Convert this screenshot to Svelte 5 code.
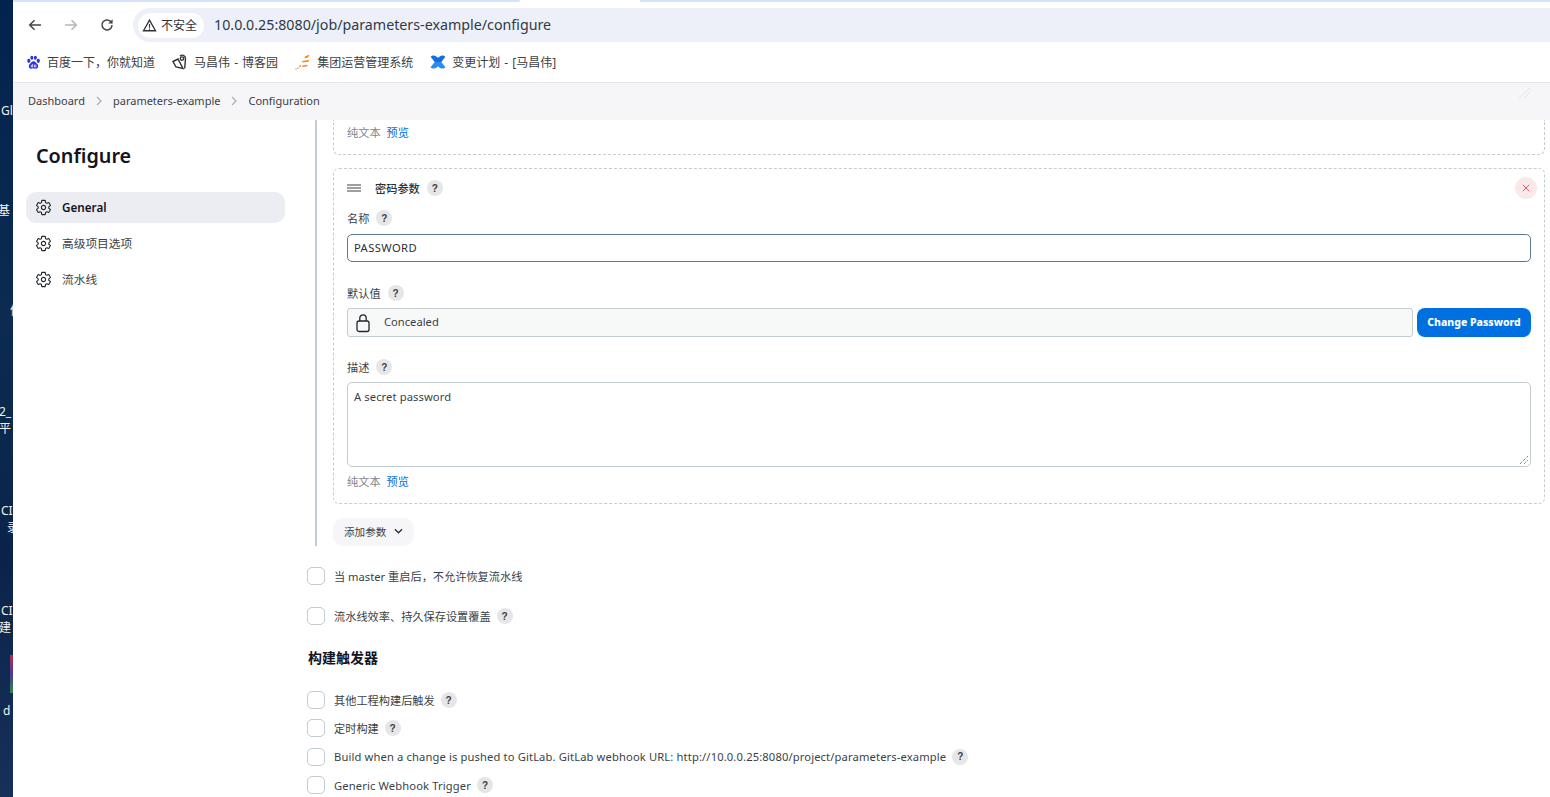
<script>
  const bookmarks = [
    { id: 'baidu', label: '百度一下，你就知道' },
    { id: 'blog', label: '马昌伟 - 博客园' },
    { id: 'group', label: '集团运营管理系统' },
    { id: 'jira', label: '变更计划 - [马昌伟]' }
  ]
  const crumbs = ['Dashboard', 'parameters-example', 'Configuration']
  const nav = [
    { label: 'General', active: true },
    { label: '高级项目选项', active: false },
    { label: '流水线', active: false }
  ]
  const gear =
    'M262.29 192.31a64 64 0 1057.4 57.4 64.13 64.13 0 00-57.4-57.4zM416.39 256a154.34 154.34 0 01-1.53 20.79l45.21 35.46a10.81 10.81 0 012.45 13.75l-42.77 74a10.81 10.81 0 01-13.14 4.59l-44.9-18.08a16.11 16.11 0 00-15.17 1.75A164.48 164.48 0 01325 400.8a15.94 15.94 0 00-8.82 12.14l-6.73 47.89a11.08 11.08 0 01-10.68 9.17h-85.54a11.11 11.11 0 01-10.69-8.87l-6.72-47.82a16.07 16.07 0 00-9-12.22 155.3 155.3 0 01-21.46-12.57 16 16 0 00-15.11-1.71l-44.89 18.07a10.81 10.81 0 01-13.14-4.58l-42.77-74a10.8 10.8 0 012.45-13.75l38.21-30a16.05 16.05 0 006-14.08c-.36-4.17-.58-8.33-.58-12.5s.21-8.27.58-12.35a16 16 0 00-6.07-13.94l-38.19-30A10.81 10.81 0 0149.48 186l42.77-74a10.81 10.81 0 0113.14-4.59l44.9 18.08a16.11 16.11 0 0015.17-1.75A164.48 164.48 0 01187 111.2a15.94 15.94 0 008.82-12.14l6.73-47.89A11.08 11.08 0 01213.23 42h85.54a11.11 11.11 0 0110.69 8.87l6.72 47.82a16.07 16.07 0 009 12.22 155.3 155.3 0 0121.46 12.57 16 16 0 0015.11 1.71l44.89-18.07a10.81 10.81 0 0113.14 4.58l42.77 74a10.8 10.8 0 01-2.45 13.75l-38.21 30a16.05 16.05 0 00-6.05 14.08c.33 4.14.55 8.3.55 12.47z'
  const scraps = [
    { text: 'Gl', x: 1, y: 103 },
    { text: '基', x: -2, y: 203 },
    { text: '信', x: 10, y: 303 },
    { text: '2_', x: -1, y: 404 },
    { text: '平', x: -1, y: 421 },
    { text: 'CI', x: 1, y: 503 },
    { text: '录', x: 7, y: 520 },
    { text: 'CI', x: 1, y: 603 },
    { text: '建', x: -1, y: 620 },
    { text: 'd', x: 3, y: 703 }
  ]
</script>

<div class="screen">
  <div class="desktop">
    {#each scraps as s}
      <span class="scrap" style="left:{s.x}px;top:{s.y}px">{s.text}</span>
    {/each}
    <span class="shortcut"></span>
  </div>

  <div class="browser">
    <div class="tabs">
      <div class="tab-a"></div>
      <div class="tab-b"></div>
    </div>

    <div class="toolbar">
      <svg class="tool" viewBox="0 0 16 16"><path d="M14 8H3M7.5 3.2 2.7 8l4.8 4.8" /></svg>
      <svg class="tool off" viewBox="0 0 16 16"><path d="M2 8h11M8.5 3.2 13.3 8l-4.8 4.8" /></svg>
      <svg class="tool" viewBox="0 0 16 16"><path d="M13 8a5 5 0 1 1-1.500-3.600L13 6" /><path class="fill" d="M13.600 2.200v4.400H9.200z" /></svg>
      <div class="omnibox">
        <span class="chip">
          <svg viewBox="0 0 16 16" width="15" height="15"><path d="M8 2.200 14.400 13.600H1.600z" fill="none" stroke="#2f3136" stroke-width="1.400" /><path d="M8 6.400v4M8 11.200v1.200" stroke="#2f3136" stroke-width="1.200" /></svg>
          不安全
        </span>
        <span class="url">10.0.0.25:8080/job/parameters-example/configure</span>
      </div>
    </div>

    <div class="bookmarks">
      {#each bookmarks as b}
        <div class="bookmark">
          {#if b.id === 'baidu'}
            <svg viewBox="0 0 16 16" width="15" height="15">
              <g fill="#2932e1">
                <ellipse cx="3" cy="6.200" rx="1.700" ry="2.200" />
                <ellipse cx="6.200" cy="2.900" rx="1.600" ry="2.200" />
                <ellipse cx="10" cy="2.900" rx="1.600" ry="2.200" />
                <ellipse cx="13.100" cy="6.200" rx="1.700" ry="2.200" />
                <path d="M8 6.600c-2 0-2.600 1.900-4 3-1.500 1.200-1.500 4.900 1.400 5 1 0 1.700-.4 2.600-.4s1.700.4 2.600.4c2.900-.1 2.900-3.800 1.400-5-1.400-1.100-2-3-4-3z" />
              </g>
              <path d="M5.600 10.500v2.300h1.500v-3.400M9 10.200v2.600h1.500v-2.600" fill="none" stroke="#fff" stroke-width=".8" />
            </svg>
          {:else if b.id === 'blog'}
            <svg viewBox="0 0 16 16" width="16" height="16" fill="none" stroke="#333" stroke-width="1.400">
              <path d="M1 7.500 6 5l5 9.500-7-1.500z" />
              <path d="M8 2c2-1.600 5.500-.8 5.500 2.500l-.8 10" />
              <circle cx="10" cy="4.600" r="1.700" />
            </svg>
          {:else if b.id === 'group'}
            <svg viewBox="0 0 16 16" width="16" height="16" fill="#ee8a1c">
              <path d="M10 2.500 14.500.5l-1.500 3-3.500 1zM7.500 7l7-1.200-1.200 2L7 8.600zM7.500 11.500l5.500-.8-1.500 1.800-4.500.4zM4.500 11.500l1.600-.7-.6 2.200-1.300.5zM2.400 13.500l1.100-.3-.3 1.600-1 .2zM.4 14.500h1.100v1.200H.4z" />
            </svg>
          {:else}
            <svg viewBox="0 0 16 16" width="16" height="16">
              <path fill="#0f6fe0" d="M.6 2.800c2.600-2.600 5.200-1.200 7.400 1 2.200-2.200 4.800-3.600 7.400-1L11.300 8H4.700z" />
              <path fill="#2a8cf0" d="M15.400 13.200c-2.600 2.600-5.200 1.200-7.400-1-2.200 2.200-4.800 3.600-7.400 1L4.700 8h6.600z" />
            </svg>
          {/if}
          <span>{b.label}</span>
        </div>
      {/each}
    </div>

    <div class="crumbs">
      {#each crumbs as c, i}
        {#if i > 0}
          <svg class="sep" viewBox="0 0 8 10" width="8" height="10"><path d="M2 1l4 4-4 4" /></svg>
        {/if}
        <span>{c}</span>
      {/each}
      <svg class="ghost" viewBox="0 0 16 16" width="16" height="16"><path d="M3 13 14 3M8 13l6-6" /></svg>
    </div>

    <div class="main">
      <aside class="sidebar">
        <h1>Configure</h1>
        {#each nav as n}
          <div class="nav-item" class:active={n.active}>
            <svg viewBox="0 0 512 512" width="17" height="17"><path d={gear} /></svg>
            <span>{n.label}</span>
          </div>
        {/each}
      </aside>

      <section class="form">
        <div class="params">
          <div class="card clipped">
            <div class="textfoot">纯文本 <a href="#top">预览</a></div>
          </div>

          <div class="card">
            <div class="card-head">
              <svg class="drag" viewBox="0 0 14 8" width="14" height="8"><path d="M0 1h14M0 4h14M0 7h14" /></svg>
              <strong>密码参数</strong>
              <span class="help">?</span>
              <span class="remove">
                <svg viewBox="0 0 8 8" width="8" height="8"><path d="M.8.8l6.400 6.400M7.200.8.8 7.200" /></svg>
              </span>
            </div>

            <div class="label first">名称 <span class="help">?</span></div>
            <div class="input focus">PASSWORD</div>

            <div class="label second">默认值 <span class="help">?</span></div>
            <div class="secret">
              <div class="concealed">
                <svg viewBox="0 0 16 20" width="16" height="20" fill="none" stroke="#20252c" stroke-width="1.300">
                  <rect x="2" y="8" width="12" height="10.500" rx="2" />
                  <path d="M4.800 8V5a3.200 3.200 0 0 1 6.400 0v3" />
                </svg>
                <span>Concealed</span>
              </div>
              <button type="button">Change Password</button>
            </div>

            <div class="label third">描述 <span class="help">?</span></div>
            <div class="textarea">
              A secret password
              <svg class="grip" viewBox="0 0 10 10" width="10" height="10"><path d="M1 9 9 1M5 9l4-4" /></svg>
            </div>
            <div class="textfoot">纯文本 <a href="#top">预览</a></div>
          </div>

          <button type="button" class="add">
            添加参数
            <svg viewBox="0 0 10 6" width="9" height="6"><path d="M1 1l4 4 4-4" /></svg>
          </button>
        </div>

        <div class="check gap-a"><i></i>当 master 重启后，不允许恢复流水线</div>
        <div class="check gap-b"><i></i>流水线效率、持久保存设置覆盖 <span class="help">?</span></div>

        <h2>构建触发器</h2>

        <div class="check gap-c"><i></i>其他工程构建后触发 <span class="help">?</span></div>
        <div class="check gap-d"><i></i>定时构建 <span class="help">?</span></div>
        <div class="check gap-d latin"><i></i>Build when a change is pushed to GitLab. GitLab webhook URL: http://10.0.0.25:8080/project/parameters-example <span class="help">?</span></div>
        <div class="check gap-d latin"><i></i>Generic Webhook Trigger <span class="help">?</span></div>
      </section>
    </div>
  </div>
</div>

<style>
  :global(body) {
    margin: 0;
    overflow: hidden;
  }

  .screen {
    display: flex;
    width: 1550px;
    height: 797px;
    overflow: hidden;
    font-family: "Noto Sans", "Noto Sans CJK SC", sans-serif;
    font-size: 11.2px;
    color: #3a3f47;
  }

  .desktop {
    position: relative;
    flex: none;
    width: 13px;
    overflow: hidden;
    background: linear-gradient(180deg, #03234f 0%, #0c2b50 40%, #0a2449 70%, #17305a 100%);
  }

  .scrap {
    position: absolute;
    color: #f2f2f2;
    font-size: 12px;
    line-height: 16px;
  }

  .shortcut {
    position: absolute;
    left: 10px;
    top: 655px;
    width: 3px;
    height: 38px;
    background: linear-gradient(180deg, #b5304a 0%, #4a3a9a 50%, #2d8a4a 100%);
  }

  .browser {
    flex: 1;
    min-width: 0;
    display: flex;
    flex-direction: column;
    background: #fff;
  }

  .tabs {
    display: flex;
    height: 2px;
    background: #fff;
  }

  .tab-a {
    width: 507px;
    background: #d3e3fd;
    border-bottom-right-radius: 4px;
  }

  .tab-b {
    flex: 1;
    margin-left: 120px;
    background: #d3e3fd;
  }

  .toolbar {
    display: flex;
    align-items: center;
    height: 34px;
    padding-top: 6px;
  }

  .tool {
    flex: none;
    width: 16px;
    height: 16px;
    margin-left: 14px;
    margin-right: 6px;
    fill: none;
    stroke: #45474a;
    stroke-width: 1.5;
  }

  .tool.off {
    stroke: #b4b6b9;
  }

  .tool .fill {
    fill: #45474a;
    stroke: none;
  }

  .omnibox {
    flex: 1;
    display: flex;
    align-items: center;
    gap: 10px;
    height: 34px;
    margin-left: 12px;
    padding-left: 5px;
    background: #edf0f9;
    border-radius: 17px 0 0 17px;
  }

  .chip {
    display: flex;
    align-items: center;
    gap: 4px;
    height: 25px;
    padding: 0 7px 0 4px;
    background: #fff;
    border-radius: 13px;
    font-size: 12px;
    color: #2f3136;
  }

  .url {
    padding-bottom: 2px;
    font-size: 14.25px;
    color: #2f3a46;
  }

  .bookmarks {
    display: flex;
    align-items: center;
    gap: 17px;
    height: 40px;
    padding-left: 13px;
    border-bottom: 1px solid #e6e6e8;
    font-size: 12px;
    word-spacing: 1px;
    color: #3c4043;
  }

  .bookmark {
    display: flex;
    align-items: center;
    gap: 6px;
  }

  .crumbs {
    position: relative;
    display: flex;
    align-items: center;
    gap: 10px;
    height: 35px;
    padding: 0 0 2px 15px;
    background: #f6f6f8;
    font-size: 11px;
    color: #3b4049;
  }

  .sep {
    fill: none;
    stroke: #a8acb3;
    stroke-width: 1.200;
  }

  .ghost {
    position: absolute;
    left: 1503px;
    top: 2px;
    fill: none;
    stroke: #e4e5e8;
  }

  .main {
    flex: 1;
    min-height: 0;
    display: flex;
    overflow: hidden;
  }

  .sidebar {
    flex: none;
    width: 294px;
    box-sizing: border-box;
    padding: 0 22px 0 13px;
  }

  h1 {
    margin: 22px 0 22px 10px;
    font-size: 19.8px;
    line-height: 28px;
    font-weight: 600;
    color: #14141f;
  }

  .nav-item {
    display: flex;
    align-items: center;
    gap: 9px;
    height: 31px;
    margin-bottom: 5px;
    padding-left: 9px;
    border-radius: 10px;
    font-size: 11.700px;
    color: #3a3f47;
  }

  .nav-item span {
    margin-top: -2px;
    margin-left: 1px;
  }

  .nav-item.active {
    background: #ecedf2;
    font-weight: 600;
    color: #14141f;
  }

  .nav-item svg {
    fill: none;
    stroke: #20252c;
    stroke-width: 34;
    stroke-linejoin: round;
  }

  .form {
    flex: 1;
    min-width: 0;
  }

  .params {
    margin-left: 8px;
    padding: 0 5px 0 16px;
    border-left: 2px solid #c3ccd1;
    height: 426px;
  }

  .card {
    box-sizing: border-box;
    height: 336px;
    padding: 9px 13px 0 13px;
    border: 1px dashed #c3ccd1;
    border-radius: 6px;
  }

  .card.clipped {
    height: 35px;
    margin-bottom: 13px;
    padding-top: 5px;
    border-top: none;
    border-top-left-radius: 0;
    border-top-right-radius: 0;
  }

  .card-head {
    display: flex;
    align-items: center;
    gap: 14px;
    height: 20px;
    font-weight: 600;
    color: #2b2f36;
  }

  .card-head strong {
    font-weight: 500;
  }

  .card-head .help {
    margin-left: -7px;
  }

  .drag {
    fill: none;
    stroke: #3a3f47;
    stroke-width: 1.100;
  }

  .remove {
    display: flex;
    align-items: center;
    justify-content: center;
    width: 22px;
    height: 22px;
    margin-left: auto;
    margin-right: -6px;
    border-radius: 50%;
    background: #fbe9ea;
  }

  .remove svg {
    fill: none;
    stroke: #e6566e;
    stroke-width: 1;
  }

  .label {
    display: flex;
    align-items: center;
    gap: 7px;
    height: 18px;
    color: #3a3f47;
  }

  .label.first {
    margin-top: 11px;
    margin-bottom: 7px;
  }

  .label.second {
    margin-top: 22px;
    margin-bottom: 6px;
  }

  .label.third {
    margin-top: 21px;
    margin-bottom: 6px;
  }

  .help {
    display: inline-flex;
    align-items: center;
    justify-content: center;
    width: 16px;
    height: 16px;
    margin-left: 3px;
    border-radius: 50%;
    background: #e6e6e8;
    font-family: "Liberation Sans", sans-serif;
    font-size: 10px;
    font-weight: 700;
    color: #3a3f47;
  }

  .label .help {
    margin-left: 0;
  }

  .input {
    box-sizing: border-box;
    display: flex;
    align-items: center;
    height: 28px;
    padding: 0 6px 2px;
    border: 1px solid #5f7a8c;
    border-radius: 5px;
    letter-spacing: 0.4px;
    color: #2b2f36;
  }

  .secret {
    display: flex;
    gap: 4px;
    height: 29px;
  }

  .concealed {
    flex: 1;
    box-sizing: border-box;
    display: flex;
    align-items: center;
    gap: 13px;
    padding: 0 0 2px 7px;
    background: #f7f8f8;
    border: 1px solid #c3ccd1;
    border-radius: 3px;
  }

  .concealed svg {
    margin-top: 2px;
  }

  .secret button {
    flex: none;
    width: 114px;
    padding: 0 0 2px;
    border: none;
    border-radius: 8px;
    background: #0070e0;
    color: #fff;
    font: inherit;
    font-size: 10.500px;
    font-weight: 800;
  }

  .textarea {
    position: relative;
    box-sizing: border-box;
    height: 85px;
    padding: 6px;
    border: 1px solid #c3ccd1;
    border-radius: 5px;
    line-height: 15px;
    letter-spacing: 0.1px;
  }

  .grip {
    position: absolute;
    right: 1px;
    bottom: 1px;
    fill: none;
    stroke: #555;
    stroke-dasharray: 1 1;
  }

  .textfoot {
    margin-top: 7px;
    line-height: 16px;
    color: #7d8590;
  }

  .textfoot a {
    margin-left: 3px;
    color: #0070e0;
    text-decoration: none;
  }

  .card.clipped .textfoot {
    margin-top: 0;
  }

  .add {
    display: flex;
    align-items: center;
    gap: 8px;
    height: 28px;
    margin-top: 14px;
    padding: 0 11px 2px 11px;
    border: none;
    border-radius: 10px;
    background: #f6f6f8;
    font: inherit;
    font-size: 10.600px;
    color: #3a3f47;
  }

  .add svg {
    fill: none;
    stroke: #2b2f36;
    stroke-width: 1.400;
  }

  .check {
    display: flex;
    align-items: center;
    height: 18px;
    white-space: pre;
    color: #3a3f47;
  }

  .check.latin {
    letter-spacing: 0.13px;
  }

  .check i {
    flex: none;
    box-sizing: border-box;
    width: 18px;
    height: 18px;
    margin-right: 9px;
    border: 1.500px solid #c3ccd1;
    border-radius: 5px;
    background: #fff;
  }

  .gap-a {
    margin-top: 21px;
  }

  .gap-b {
    margin-top: 22px;
  }

  .gap-c {
    margin-top: 23px;
  }

  .gap-d {
    margin-top: 10.400px;
  }

  h2 {
    margin: 23px 0 0 1px;
    font-size: 14px;
    line-height: 20px;
    font-weight: 600;
    color: #14141f;
  }
</style>
